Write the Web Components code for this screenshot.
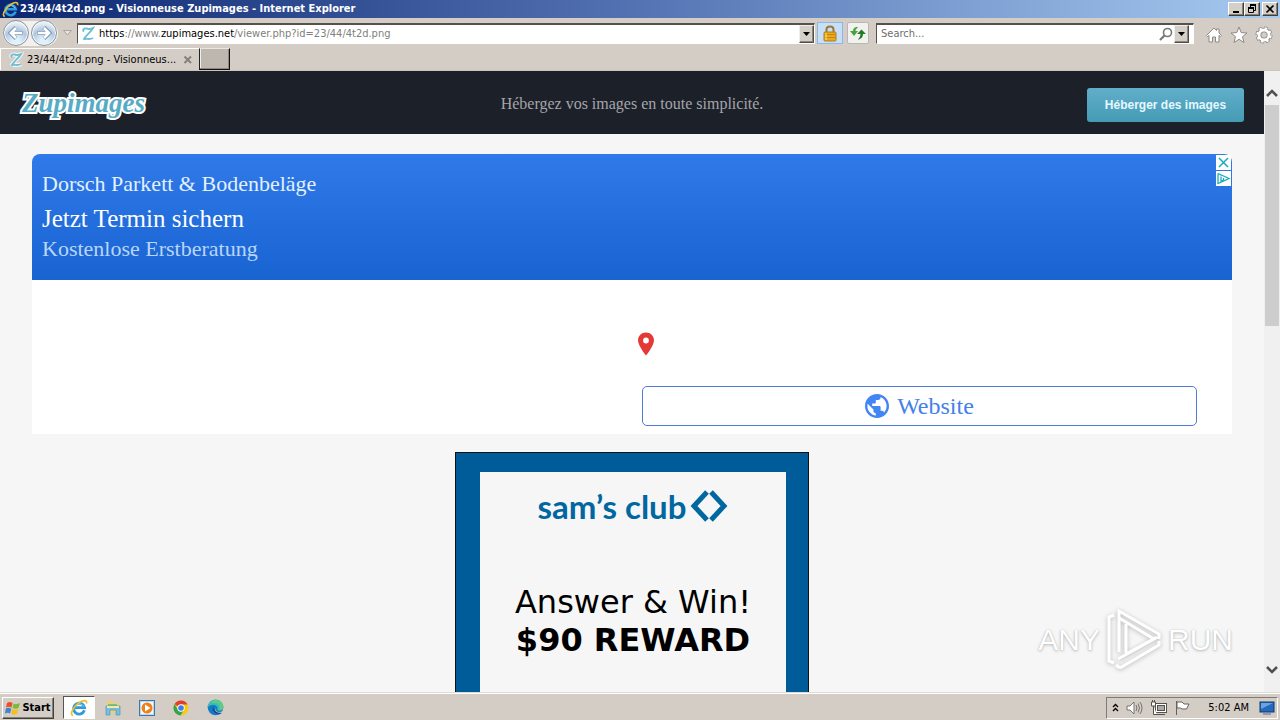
<!DOCTYPE html>
<html lang="en">
<head>
<meta charset="utf-8">
<title>23/44/4t2d.png - Visionneuse Zupimages - Internet Explorer</title>
<style>
html,body{height:100%;margin:0}
body{font:11px/14px "DejaVu Sans Condensed","DejaVu Sans",sans-serif;color:#000;background:#d4cdc6}
</style>
</head>
<body>
<desktop-screen>
  <title-bar slot="title">23/44/4t2d.png - Visionneuse Zupimages - Internet Explorer</title-bar>
  <nav-bar slot="nav"></nav-bar>
  <tab-strip slot="tabs">23/44/4t2d.png - Visionneus...</tab-strip>
  <web-page slot="page">
    <site-header>Hébergez vos images en toute simplicité.</site-header>
    <ad-banner>
      <span slot="name">Dorsch Parkett &amp; Bodenbeläge</span>
      <span slot="headline">Jetzt Termin sichern</span>
      <span slot="detail">Kostenlose Erstberatung</span>
    </ad-banner>
    <reward-card>
      <span slot="lead">Answer &amp; Win!</span>
      <span slot="prize">$90 REWARD</span>
    </reward-card>
    <brand-watermark slot="overlay"></brand-watermark>
  </web-page>
  <scroll-rail slot="rail"></scroll-rail>
  <task-bar slot="tasks"></task-bar>
</desktop-screen>

<script>
function component(name, css, html) {
  customElements.define(name, class extends HTMLElement {
    constructor() {
      super();
      this.attachShadow({mode: 'open'}).innerHTML =
        '<style>:host,*{box-sizing:border-box}svg{display:block;flex:none}button{font:inherit;color:inherit;padding:0;margin:0;border:0;background:none;display:flex;align-items:center;justify-content:center;flex:none}' + css + '</style>' + html;
    }
  });
}

const ieIcon = (s) => `<svg width="${s}" height="${s}" viewBox="0 0 18 18"><path d="M14.4 11.3A5.5 5.5 0 1 1 14.6 8.7H5" fill="none" stroke="#2f9ade" stroke-width="2.800"/><path d="M14 7.8A5.2 5.2 0 0 0 5 7" fill="none" stroke="#7bd1f5" stroke-width="1"/><path d="M3 16.3C-1 16 3.500 7.500 9 3.800 13 1 17.500.5 16.500 4.500" fill="none" stroke="#edc12e" stroke-width="1.700"/></svg>`;
const zIcon = `<svg width="16" height="16" viewBox="0 0 16 16"><path d="M4 5.500C2 4 4 2 6.500 2.500S10 3.600 13 2C11 6 6 9 3.500 13.500 6 11.500 9 14.500 13 12" fill="none" stroke="#fff" stroke-width="4" opacity=".8"/><path d="M4 5.500C2 4 4 2 6.500 2.500S10 3.600 13 2C11 6 6 9 3.500 13.500 6 11.500 9 14.500 13 12" fill="none" stroke="#6fbfd6" stroke-width="1.900"/></svg>`;
const down = `<svg width="7" height="4" viewBox="0 0 7 4"><path d="M0 0H7L3.500 4Z"/></svg>`;

component('desktop-screen', `
:host{display:grid;height:100vh;overflow:hidden;grid-template:18px 30px 23px minmax(0,1fr) 28px / minmax(0,1fr) 16px}
slot{display:grid;grid-column:1/-1;min-height:0}
slot[name=page]{grid-column:1}slot[name=rail]{grid-column:2}`,
`<slot name="title"></slot><slot name="nav"></slot><slot name="tabs"></slot><slot name="page"></slot><slot name="rail"></slot><slot name="tasks"></slot>`);

component('title-bar', `
:host{display:flex;align-items:center;padding:0 2px;color:#fff;font-weight:bold;background:linear-gradient(90deg,#0b2670,#5473b3 50%,#a6caf0)}
.name{flex:1;padding-left:1px}
button{width:16px;height:14px;background:#d4d0c8;border:1px solid;border-color:#fff #404040 #404040 #fff;box-shadow:inset -1px -1px #858078}
.close{margin-left:2px}`,
`${ieIcon(17)}<span class="name"><slot></slot></span>
<button aria-label="Minimize"><svg width="10" height="10"><path d="M2 8H8" stroke="#000" stroke-width="2"/></svg></button>
<button aria-label="Restore"><svg width="10" height="10" fill="none" stroke="#000"><path d="M3 1H9M3.500 1V3.500M8.500 1V6.500H6.500M1 4H6.500M1.500 4V8.500H6.500V4" /><path d="M3 1H9M1 4H7" stroke-width="2"/></svg></button>
<button class="close" aria-label="Close"><svg width="10" height="10"><path d="M1.500 1.500L8.500 8.500M8.500 1.500L1.500 8.500" stroke="#000" stroke-width="1.700"/></svg></button>`);

component('nav-bar', `
:host{display:flex;align-items:center;background:#d4cdc6;padding:0 7px 0 3px}
.history{display:flex;align-items:center;gap:2px;background:#f2f1ef;border-radius:13px;height:25px;padding-right:1px}
.round{width:26px;height:26px;border-radius:50%;border:1px solid #8b929c;background:radial-gradient(circle at 50% 85%,#dff1fb 0 15%,#b1c7df 50%,#e5edf5 75%);box-shadow:inset 0 0 0 1px #f5fbff}
.recent{width:18px;height:20px}
.field{display:flex;align-items:center;background:#fff;height:21px;border:1px solid;border-color:#55514c #fff #fff #55514c;border-top-width:2px;min-width:0}
.address{flex:1;margin-left:1px;padding-left:2px}
.url{flex:1;margin-left:3px;color:#808080;outline:0;white-space:nowrap}
.url b{font-weight:normal;color:#000}
.search{width:318px;margin-left:7px;padding:0 4px 0 4px}
input{flex:1;min-width:0;border:0;padding:0;background:none;outline:0;font:inherit;color:#6e6e6e}
input::placeholder{color:#6e6e6e;opacity:1}
.drop{width:15px;height:18px;background:#d4d0c8;border:1px solid;border-color:#eee #504d49 #504d49 #eee;box-shadow:inset -1px -1px #8c8780}
.search .drop{margin-left:1px}
.lock{width:26px;height:22px;background:#c7dff9;border:1px solid #8db7e5;margin-left:2px}
.refresh{width:22px;height:22px;background:#f1f1ef;border:1px solid #b9b7b3;border-radius:2px;margin-left:4px}
.tools{display:flex;gap:7px;margin-left:11px;padding-top:3px}`,
`<div class="history">
<button class="round" aria-label="Back"><svg width="16" height="16"><path d="M14.500 8H3M8 2.500L2.500 8 8 13.500" fill="none" stroke="#7d96b5" stroke-width="4"/><path d="M14 8H3M8 3L3 8 8 13" fill="none" stroke="#fff" stroke-width="2.600"/></svg></button>
<button class="round" aria-label="Forward"><svg width="16" height="16"><path d="M1.500 8H13M8 2.500L13.500 8 8 13.500" fill="none" stroke="#7d96b5" stroke-width="4"/><path d="M2 8H13M8 3L13 8 8 13" fill="none" stroke="#fff" stroke-width="2.600"/></svg></button></div>
<button class="recent" aria-label="Recent pages"><svg width="9" height="6"><path d="M.5.5H8.500L4.500 5Z" fill="#e6e2dd" stroke="#aaa59f"/></svg></button>
<div class="field address">${zIcon}<div class="url" role="textbox" aria-label="Address" contenteditable="true" spellcheck="false"><b>https</b>://www.<b>zupimages.net</b>/viewer.php?id=23/44/4t2d.png</div><button class="drop" aria-label="Address list">${down}</button></div>
<button class="lock" aria-label="Security report"><svg width="14" height="17"><path d="M3.500 8V4.500Q3.500 1.500 7 1.500T10.500 4.500V8" fill="none" stroke="#9b7a36" stroke-width="2"/><rect x="1" y="7" width="12" height="9" rx="1" fill="#e8a91c" stroke="#b67c10"/><path d="M1.500 9.500H12.500M1.500 12.500H12.500" stroke="#c58712"/><path d="M3 8V15" stroke="#ffe07a"/></svg></button>
<button class="refresh" aria-label="Refresh"><svg width="16" height="16"><path d="M0 6L4 11 8 6H5.500V5L8 2H6Q3 3 3 6Z" fill="#47a23d"/><path d="M7 9L11.500 4.500 16 9H13Q13 13 9 14.500H8Q10.500 12 10.500 9Z" fill="#237b25"/></svg></button>
<div class="field search"><input type="text" aria-label="Search" placeholder="Search..."><svg width="14" height="14"><circle cx="8.500" cy="5.500" r="4" fill="none" stroke="#777" stroke-width="1.600"/><path d="M5.500 8.500L1 13" stroke="#777" stroke-width="2.200"/></svg><button class="drop" aria-label="Search options">${down}</button></div>
<div class="tools">
<button aria-label="Home"><svg width="18" height="18"><path d="M1.500 9.500L9 2 11.500 4.500V3H14V7L16.500 9.500 15.500 10.500 14 9.500V16H10.500V11H7.500V16H4V9.500L2.500 10.500Z" fill="#fff" stroke="#8d8984"/></svg></button>
<button aria-label="Favorites"><svg width="18" height="18"><path d="M9 1L11.200 6.600 17 7 12.500 10.700 14 16.500 9 13.300 4 16.500 5.500 10.700 1 7 6.800 6.600Z" fill="#fff" stroke="#8d8984"/></svg></button>
<button aria-label="Tools"><svg width="18" height="18"><g fill="none"><circle cx="9" cy="9" r="6.800" stroke="#8d8984" stroke-width="3.500" stroke-dasharray="3.300 2.040"/><circle cx="9" cy="9" r="5" stroke="#8d8984" stroke-width="4.500"/><circle cx="9" cy="9" r="6.600" stroke="#fff" stroke-width="2.400" stroke-dasharray="2.300 2.884" stroke-dashoffset="-.5"/><circle cx="9" cy="9" r="5" stroke="#fff" stroke-width="2.800"/></g></svg></button></div>`);

component('tab-strip', `
:host{display:flex;background:#d4cdc6;border-bottom:1px solid #c9c4be}
.tab{width:199px;display:flex;align-items:center;padding-left:7px;border-top:1px solid #fff;border-left:1px solid #fff;gap:3px}
.label{flex:1;white-space:nowrap}
.x{width:12px;height:12px;margin-right:5px}
.new{width:31px;height:22px;background:#bdb7b0;border:1px solid #e9e6e1;border-right:1px solid #111;border-bottom:1px solid #111;border-left:1px solid #222;box-shadow:inset -1px -1px #8d8780,inset 1px 0 #eee}`,
`<div class="tab">${zIcon}<span class="label"><slot></slot></span><button class="x" aria-label="Close tab"><svg width="10" height="10"><path d="M1.500 1.500L8 8M8 1.500L1.500 8" stroke="#85807b" stroke-width="2"/></svg></button></div><button class="new" aria-label="New tab"></button>`);

component('web-page', `
:host{display:flex;flex-direction:column;overflow:hidden;background:#f6f6f6;position:relative;font-family:"Liberation Serif",serif}
::slotted(*){flex:none}`,
`<slot></slot><slot name="overlay"></slot>`);

component('site-header', `
:host{display:grid;grid-template-columns:1fr auto 1fr;align-items:center;height:63px;padding:0 20px;background:#1c2029;color:#a4a5a9;font-size:16px;line-height:20px}
.logo{font:italic bold 27px/36px "Liberation Serif",serif;color:#57abc4;text-decoration:none;-webkit-text-stroke:4px #fff;paint-order:stroke fill;justify-self:start;padding:0 2px}
p{margin:0;padding-top:2px}
.host{justify-self:end;width:157px;height:34px;border-radius:3px;background:linear-gradient(#61aeca,#459bb5);color:#e4f8ff;font:bold 12px/16px "Liberation Sans",sans-serif;margin-top:4px}`,
`<a class="logo" href="#">Zupimages</a><p><slot></slot></p><button class="host">Héberger des images</button>`);

component('ad-banner', `
:host{display:block;position:relative;margin:20px 32px 0;background:#fff}
.top{height:126px;padding:15px 10px 0;border-radius:8px 8px 0 0;background:linear-gradient(#3079ea,#1864d1);color:#d9e9ff;font-size:22px;line-height:30px;display:flex;flex-direction:column}
:host{background:linear-gradient(#f6f6f6 20px,#fff 20px)}
.headline{font-size:25px;line-height:40px;color:#fff}
.name{color:#e3f0ff}.detail{color:#b9d5fa;line-height:20px}
.body{height:154px;display:flex;flex-direction:column;padding:50px 35px 8px calc(50% + 2px)}
.site{display:flex;align-items:center;justify-content:center;gap:8px;height:40px;margin-top:auto;margin-left:8px;border:1px solid #4e7ad8;border-radius:5px;color:#4380ea;font-size:24px;line-height:30px;text-decoration:none}
.pin{align-self:flex-start}
.choices{position:absolute;top:1px;right:1px;display:grid;gap:1px}
.choices button{width:15px;height:15px;background:#fff}`,
`<div class="top"><span class="name"><slot name="name"></slot></span><span class="headline"><slot name="headline"></slot></span><span class="detail"><slot name="detail"></slot></span></div>
<div class="body"><svg class="pin" width="24" height="28" viewBox="0 0 24 28"><path d="M12 2.500C7.500 2.500 4 6 4 10.300 4 16 12 25.500 12 25.500S20 16 20 10.300C20 6 16.500 2.500 12 2.500ZM12 7.600A2.900 2.900 0 1 1 12 13.400 2.900 2.900 0 0 1 12 7.600Z" fill="#e53935"/></svg>
<a class="site" href="#"><svg width="24" height="24" viewBox="2 2 20 20"><path fill="#4285f4" d="M12 2C6.480 2 2 6.480 2 12s4.480 10 10 10 10-4.480 10-10S17.520 2 12 2zm-1 17.930c-3.950-.49-7-3.850-7-7.930 0-.62.080-1.210.21-1.790L9 15v1c0 1.100.9 2 2 2v1.930zm6.900-2.540c-.26-.81-1-1.390-1.900-1.390h-1v-3c0-.55-.45-1-1-1H8v-2h2c.55 0 1-.45 1-1V7h2c1.100 0 2-.9 2-2v-.41c2.930 1.190 5 4.060 5 7.410 0 2.080-.8 3.970-2.100 5.390z"/></svg>Website</a></div>
<div class="choices"><button aria-label="Close ad"><svg width="13" height="13"><path d="M2 2L11 11M11 2L2 11" stroke="#18aebd" stroke-width="1.500"/></svg></button><button aria-label="AdChoices"><svg width="15" height="15" fill="none" stroke="#18aebd" stroke-width="1.300"><path d="M2 2.500V12.500L13 7.500 2 2.500M5 6V10.500L7.500 9V7"/><path d="M5 4.500V5.500"/></svg></button></div>`);

component('reward-card', `
:host{display:block;align-self:center;width:354px;height:400px;margin-top:18px;padding:19px 22px 0 24px;background:#005c98;border:1px solid #111;font-family:"DejaVu Sans",sans-serif}
.inner{background:#f6f6f6;height:100%;padding-top:15px;display:flex;flex-direction:column;align-items:center}
.logo{display:flex;align-items:center;gap:4px;color:#0067a0;font:bold 33px/38px Lato,sans-serif}
.lead,.prize{font-size:32px;line-height:38px;text-align:center;white-space:nowrap}
.lead{margin-top:58px}.prize{font-weight:bold}`,
`<div class="inner"><div class="logo">sam’s club<svg width="38" height="34" viewBox="0 0 38 34" fill="none" stroke="#0067a0" stroke-width="5"><path d="M17 3L4 17 17 31M21 3L34 17 21 31"/></svg></div>
<span class="lead"><slot name="lead"></slot></span><span class="prize"><slot name="prize"></slot></span></div>`);

component('brand-watermark', `
:host{display:flex;align-items:center;gap:6px;position:absolute;right:31px;bottom:20px;color:#fff;font:30px/60px "Liberation Sans Narrow","Liberation Sans",sans-serif;text-shadow:0 1px 3px #b5b5b5,0 0 1px #bbb;pointer-events:none}
svg{filter:drop-shadow(0 1px 2px #b5b5b5)}`,
`<span>ANY</span><svg width="56" height="64" viewBox="0 0 56 64" fill="none" stroke="#fff" stroke-width="3"><path d="M8 7L3 9V53L8 55M13 44V3L53 26V31M13 10L48 31M20 16V46L51 29M12 51L50 30M14 60L53 37V33M14 60L10 57"/></svg><span>RUN</span>`);

component('scroll-rail', `
:host{display:flex;flex-direction:column;align-items:center;background:#f0f0f0;padding:12px 0}
button{width:16px;height:20px}
.thumb{width:14px;height:221px;background:#cdcdcd;margin-top:2px;flex:none}
.down{margin-top:auto}`,
`<button aria-label="Scroll up"><svg width="12" height="8"><path d="M1 7L6 2 11 7" fill="none" stroke="#505050" stroke-width="2.500"/></svg></button><div class="thumb"></div><button class="down" aria-label="Scroll down"><svg width="12" height="8"><path d="M1 1L6 6 11 1" fill="none" stroke="#505050" stroke-width="2.500"/></svg></button>`);

component('task-bar', `
:host{display:flex;align-items:center;background:#d4cdc6;border-top:1px solid #dedad5;box-shadow:inset 0 1px #fff;padding:2px 2px 0}
.start{width:52px;height:22px;gap:1px;font-weight:bold;border:1px solid;border-color:#fff #404040 #404040 #fff;box-shadow:inset -1px -1px #858078}
.apps{display:flex;align-items:center;margin-left:9px;gap:2px;flex:1}
.apps button{width:32px;height:23px}
.apps .active{background:#fff;border:1px solid;border-color:#555 #fff #fff #555}
.tray{display:flex;align-items:center;height:22px;border:1px solid;border-color:#817b75 #fff #fff #817b75;padding:0 2px 0 5px;gap:7px}
.clock{padding:0 3px 0 10px;white-space:nowrap}`,
`<button class="start"><svg width="16" height="16"><path d="M2 3Q5 1 7.500 3L6.500 7.500Q4 6 1 7.500Z" fill="#e8502a"/><path d="M8.500 3.500Q11 5 15 3L13.500 8Q11 9.500 7.500 8Z" fill="#7dbb37"/><path d="M.8 8.500Q4 7 6.300 8.700L5 13.500Q3 12 0 13.500Z" fill="#3c86d1"/><path d="M7.200 9Q10 10.500 13.300 9L12 14Q9 15.500 6 14Z" fill="#f5be24"/></svg>Start</button>
<div class="apps">
<button class="active" aria-label="Internet Explorer">${ieIcon(18)}</button>
<button aria-label="Explorer"><svg width="18" height="18"><path d="M3 3L7 2 9 4H15V14H3Z" fill="#efd069"/><path d="M4 5H13V8H4Z" fill="#7fc37b"/><path d="M2 7H16V16H12V11H6V16H2Z" fill="#76bde0" stroke="#4f98bd" stroke-width=".7"/><path d="M3 8H15" stroke="#f8e8a5" stroke-width="2"/></svg></button>
<button aria-label="Media Player"><svg width="16" height="16"><rect x=".5" y=".5" width="15" height="15" fill="#b9d8ef" stroke="#3c78ab"/><rect x="2" y="2" width="12" height="12" fill="#f4f8fb"/><circle cx="8" cy="8" r="5.500" fill="#ef7f19"/><path d="M6 4.500V11.500L11.500 8Z" fill="#fff"/></svg></button>
<button aria-label="Chrome"><svg width="16" height="16"><circle cx="8" cy="8" r="7.500" fill="#fac916"/><path d="M8 8L1.500 4.200A7.500 7.500 0 0 1 14.500 4.500H8Z" fill="#e33b2e"/><path d="M1.500 4.200A7.500 7.500 0 0 0 7.500 15.500L11 9.800 8 11.500 5 9.800Z" fill="#34a353"/><circle cx="8" cy="8" r="3.700" fill="#fff"/><circle cx="8" cy="8" r="2.800" fill="#3b7de9"/></svg></button>
<button aria-label="Edge"><svg width="17" height="17"><circle cx="8.500" cy="8.500" r="7.800" fill="#167ac6"/><path d="M.7 8.500A7.800 7.800 0 0 1 16.300 8C16.300 11 13 12 11 11.500 9.500 11 11 10 10.500 8.500 9.500 5 3 4.500.7 8.500Z" fill="#38bfb9"/><path d="M9 1Q16 1.500 16.300 8 16 11.500 12 11.500 14 9 12 6T4 4Q6 1 9 1Z" fill="#60cd7e"/><path d="M6.500 7.500C4 11 7 15 12.500 15.300 15 14.500 16 12 15.500 12 11 14.500 6 11.500 6.500 7.500Z" fill="#0b5294"/><path d="M8.500 9Q8 12 11.500 13 14 13 16.500 11.500L16 14 11 13.500Q7 12 8.500 9Z" fill="#d4cdc6"/></svg></button></div>
<div class="tray">
<button aria-label="Show hidden icons"><svg width="7" height="9"><path d="M1 4L3.500 1.500 6 4M1 8L3.500 5.500 6 8" fill="none" stroke="#000" stroke-width="1.300"/></svg></button>
<svg width="17" height="16" fill="none" stroke="#77726d"><path d="M1 6H4L8 2V14L4 10H1Z" fill="#fff"/><path d="M10 5Q12 8 10 11M12 3.500Q15 8 12 12.500M14 2Q18 8 14 14"/></svg>
<svg width="17" height="16" fill="#fff" stroke="#55514d"><rect x="5.500" y="3.500" width="11" height="9"/><rect x="7.500" y="5.500" width="7" height="5" fill="#aaa"/><path d="M7 14.500H15M3.500 6V14.500H7M1.500 2V6H5.500V2ZM2.500 0V2M4.500 0V2"/></svg>
<svg width="17" height="16" fill="#fff" stroke="#66615c"><path d="M2.500 1V15M3 2H8L10 4H15L12.500 9H8L6.500 8H3Z"/></svg>
<span class="clock">5:02 AM</span>
<svg width="16" height="14"><rect x="1" y="1" width="14" height="10" fill="#2469bc" stroke="#0c3673"/><path d="M2 2H14L2 8Z" fill="#69a4e0"/><path d="M4 13H12" stroke="#4b6b94"/></svg></div>`);
</script>
</body>
</html>
